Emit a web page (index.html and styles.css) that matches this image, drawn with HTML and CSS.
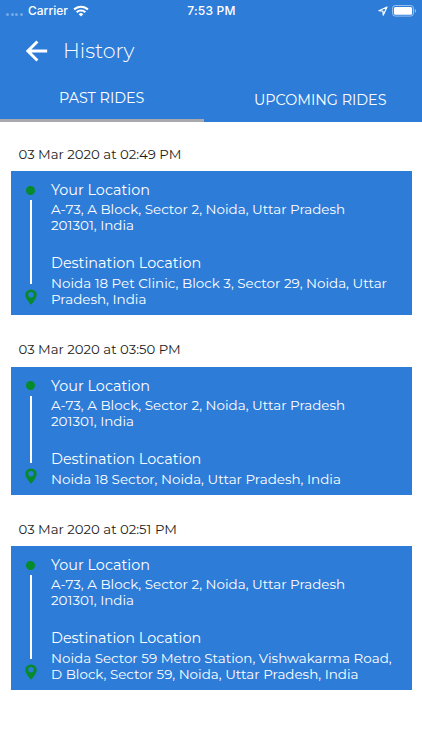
FILE: index.html
```
<!DOCTYPE html>
<html lang="en">
<head>
<meta charset="utf-8">
<title>History</title>
<link rel="stylesheet" href="styles.css">
</head>
<body>
<svg width="0" height="0" class="defs">
  <symbol id="pin" viewBox="0 0 12 16"><path fill-rule="evenodd" d="M6 .4A5.7 5.5 0 0 0 .3 5.9C.3 9.7 6 15.6 6 15.6s5.7-5.9 5.7-9.7A5.7 5.5 0 0 0 6 .4zM6 3.1a2.7 2.7 0 1 1 0 5.4 2.7 2.7 0 0 1 0-5.4z"/></symbol>
</svg>
<header class="header">
  <div class="status">
    <div class="status-left">
      <span class="signal"><i></i><i></i><i></i><i></i></span>
      <span class="carrier">Carrier</span>
      <svg class="wifi" width="16" height="12" viewBox="0 0 16 12" fill="none" stroke="#fff" stroke-width="2.1"><path d="M1.1 4.6a9.8 9.8 0 0 1 13.8 0M3.7 7.3a6.1 6.1 0 0 1 8.6 0"/><path d="M8 11.6 5.7 9.2a3.3 3.3 0 0 1 4.6 0z" fill="#fff" stroke="none"/></svg>
    </div>
    <span class="time">7:53 PM</span>
    <div class="status-right">
      <svg width="10" height="10" viewBox="0 0 10 10" fill="none" stroke="#fff" stroke-width="1.2" stroke-linejoin="round"><path d="M9 1 .9 4.7l4 .4.4 4z"/></svg>
      <svg width="25" height="12" viewBox="0 0 25 12"><rect x=".5" y=".5" width="21" height="10.6" rx="2.8" fill="none" stroke="#fff" stroke-opacity=".5"/><rect x="1.9" y="1.9" width="18.2" height="7.8" rx="1.5" fill="#fff"/><path d="M22.8 4v3.8c.8-.3 1.3-1 1.3-1.9s-.5-1.6-1.3-1.9z" fill="#fff" fill-opacity=".5"/></svg>
    </div>
  </div>
  <div class="titlebar">
    <svg width="22" height="22" viewBox="0 0 22 22" fill="none" stroke="#fff" stroke-width="2.9"><path d="M21.2 11H2.4M11.4 1.4 1.9 11l9.5 9.6"/></svg>
    <h1>History</h1>
  </div>
  <nav class="tabs">
    <a class="tab active">PAST RIDES</a>
    <a class="tab upcoming">UPCOMING RIDES</a>
  </nav>
</header>
<main>
  <section class="ride">
    <h2>03 Mar 2020 at 02:49 PM</h2>
    <div class="card">
      <div class="rail"><span class="dot"></span><span class="line"></span><svg class="pin"><use href="#pin"/></svg></div>
      <div class="stops">
        <h3>Your Location</h3>
        <p>A-73, A Block, Sector 2, Noida, Uttar Pradesh<br>201301, India</p>
        <h3>Destination Location</h3>
        <p>Noida 18 Pet Clinic, Block 3, Sector 29, Noida, Uttar<br>Pradesh, India</p>
      </div>
    </div>
  </section>
  <section class="ride">
    <h2>03 Mar 2020 at 03:50 PM</h2>
    <div class="card">
      <div class="rail"><span class="dot"></span><span class="line"></span><svg class="pin"><use href="#pin"/></svg></div>
      <div class="stops">
        <h3>Your Location</h3>
        <p>A-73, A Block, Sector 2, Noida, Uttar Pradesh<br>201301, India</p>
        <h3>Destination Location</h3>
        <p>Noida 18 Sector, Noida, Uttar Pradesh, India</p>
      </div>
    </div>
  </section>
  <section class="ride">
    <h2>03 Mar 2020 at 02:51 PM</h2>
    <div class="card">
      <div class="rail"><span class="dot"></span><span class="line"></span><svg class="pin"><use href="#pin"/></svg></div>
      <div class="stops">
        <h3>Your Location</h3>
        <p>A-73, A Block, Sector 2, Noida, Uttar Pradesh<br>201301, India</p>
        <h3>Destination Location</h3>
        <p>Noida Sector 59 Metro Station, Vishwakarma Road,<br>D Block, Sector 59, Noida, Uttar Pradesh, India</p>
      </div>
    </div>
  </section>
</main>
</body>
</html>
```
FILE: styles.css
```
* { box-sizing: border-box; margin: 0; padding: 0; }
body {
  background: #fff;
  color: #1c1c1c;
  font-family: Montserrat, Inter, sans-serif;
  overflow: hidden;
}
.defs { display: block; }
svg { display: block; flex: none; }
.header { height: 122.4px; background: #2d7cd8; color: #fff; }
.status {
  display: grid;
  grid-template-columns: 1fr auto 1fr;
  align-items: center;
  height: 21px;
  padding: 0 5px 0 6px;
  font: 500 12px/21px Inter, sans-serif;
}
.status-left, .status-right { display: flex; align-items: center; }
.status-right { justify-content: flex-end; gap: 4px; }
.signal { display: flex; gap: 1.7px; width: 22px; padding-top: 8px; }
.signal i { width: 3px; height: 3px; border-radius: 50%; background: rgba(255, 255, 255, .35); }
.wifi { margin-left: 5px; }
.time { letter-spacing: .2px; }
.titlebar { display: flex; align-items: center; gap: 15px; height: 60px; padding-left: 26px; }
h1 { font-size: 20.6px; font-weight: 300; line-height: 24px; }
.tabs { display: grid; grid-template-columns: 203.5px 1fr; height: 41.4px; }
.tab { padding-top: 8px; font-size: 14.3px; line-height: 18px; text-align: center; }
.active { border-bottom: 3px solid #a9a9ad; }
.upcoming { padding-top: 10px; padding-left: 15px; }
.ride { padding: 0 10.5px; }
h2 {
  height: 51.5px;
  padding: 25px 0 0 8px;
  font-size: 13.25px;
  font-weight: 400;
  line-height: 18px;
}
.ride:first-child h2 { height: 48.9px; padding-top: 22.6px; }
.card { display: flex; padding: 10px 0 8px 14px; background: #2d7cd8; color: #fff; }
.rail { display: flex; flex-direction: column; align-items: center; width: 12px; margin-right: 14.5px; padding: 4.3px 0 2.7px; }
.dot { width: 9px; height: 9px; border-radius: 50%; background: #078a2b; }
.line { flex: 1; width: 2px; margin: 5.5px 0 5px; background: #fff; }
.pin { width: 12px; height: 16px; fill: #078a2b; }
h3 { margin-bottom: 2px; font-size: 14.4px; font-weight: 400; line-height: 18px; }
p { font-size: 13.47px; line-height: 16px; white-space: nowrap; }
p + h3 { margin-top: 21px; margin-bottom: 3px; }
```
